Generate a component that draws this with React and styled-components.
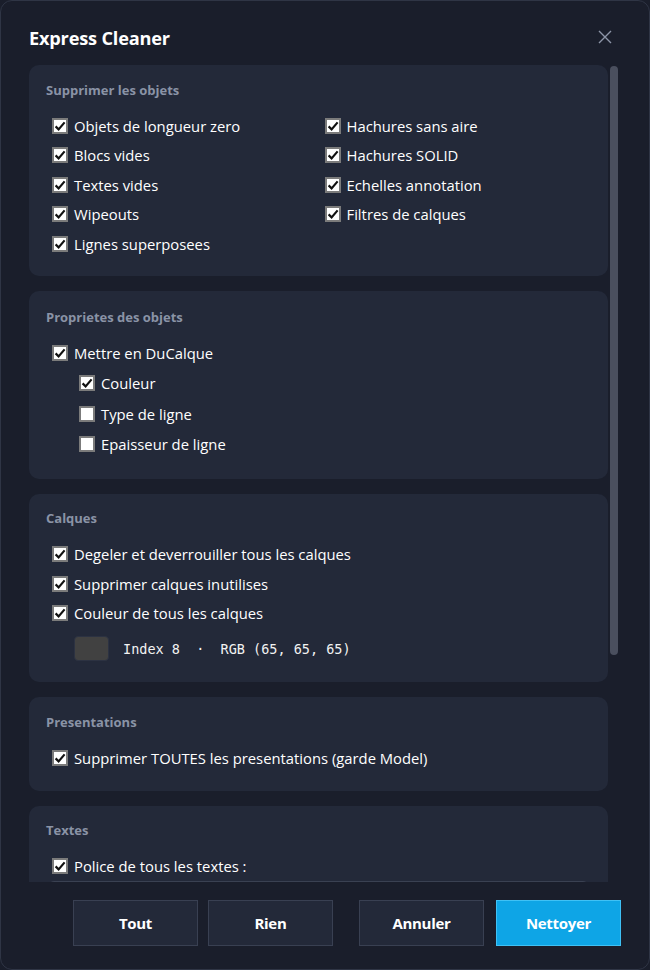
import styled, { createGlobalStyle } from "styled-components";

const GlobalStyle = createGlobalStyle`
  html, body {
    margin: 0;
    padding: 0;
    background: #1a1e2b;
  }
  body {
    font-family: "Open Sans", "Noto Sans", sans-serif;
    color: #ffffff;
  }
`;

const supprimer = [
    ["Objets de longueur zero", "Hachures sans aire"],
    ["Blocs vides", "Hachures SOLID"],
    ["Textes vides", "Echelles annotation"],
    ["Wipeouts", "Filtres de calques"],
    ["Lignes superposees", null],
];

const CheckBox = function ({checked}) {
    return (
        <Box>
            {checked && (
                <svg width="12" height="12" viewBox="0 0 12 12">
                    <path d="M1.6 6.4 L4.6 9.4 L10.6 2.4" fill="none" stroke="#111" strokeWidth="2.2" />
                </svg>
            )}
        </Box>
    );
}

const Option = function ({label, checked = true, indent}) {
    return (
        <Row indent={indent}>
            <CheckBox checked={checked} />
            <span>{label}</span>
        </Row>
    );
}

export default function App() {
    return (
        <>
            <GlobalStyle />
            <Dialog>
                <Header>
                    <Title>Express Cleaner</Title>
                    <Close>
                        <svg width="14" height="14" viewBox="0 0 14 14">
                            <path d="M1 1 L13 13 M13 1 L1 13" stroke="#8d95a8" strokeWidth="1.4" />
                        </svg>
                    </Close>
                </Header>

                <Body>
                    <Content>
                        <Section>
                            <SectionTitle>Supprimer les objets</SectionTitle>
                            <Grid>
                                {supprimer.flat().map((label, i) =>
                                    label ? <Option key={i} label={label} /> : <div key={i} />
                                )}
                            </Grid>
                        </Section>

                        <Section top="17.5px" bottom="19px">
                            <SectionTitle>Proprietes des objets</SectionTitle>
                            <Option label="Mettre en DuCalque" />
                            <Option label="Couleur" indent />
                            <Option label="Type de ligne" checked={false} indent />
                            <Option label="Epaisseur de ligne" checked={false} indent />
                        </Section>

                        <Section bottom="18px">
                            <SectionTitle>Calques</SectionTitle>
                            <Option label="Degeler et deverrouiller tous les calques" />
                            <Option label="Supprimer calques inutilises" />
                            <Option label="Couleur de tous les calques" />
                            <ColorRow>
                                <Swatch color="#414141" />
                                <Mono>{"Index 8  ·  RGB (65, 65, 65)"}</Mono>
                            </ColorRow>
                        </Section>

                        <Section bottom="18.5px">
                            <SectionTitle>Presentations</SectionTitle>
                            <Option label="Supprimer TOUTES les presentations (garde Model)" />
                        </Section>

                        <Section top="14.5px">
                            <SectionTitle>Textes</SectionTitle>
                            <Option label="Police de tous les textes :" />
                            <Field />
                        </Section>
                    </Content>
                    <Track>
                        <Thumb />
                    </Track>
                </Body>

                <Footer>
                    <Group>
                        <Button>Tout</Button>
                        <Button>Rien</Button>
                    </Group>
                    <Group>
                        <Button>Annuler</Button>
                        <Button primary>Nettoyer</Button>
                    </Group>
                </Footer>
            </Dialog>
        </>
    );
}

// Design
const Dialog = styled.div`
  box-sizing: border-box;
  width: 650px;
  height: 970px;
  border: 1px solid #2f3545;
  border-radius: 12px;
  background: #1a1e2b;
  display: flex;
  flex-direction: column;
  overflow: hidden;
`;

const Header = styled.div`
  box-sizing: border-box;
  display: flex;
  align-items: center;
  justify-content: space-between;
  height: 64px;
  padding: 10px 34px 0 28px;
  flex-shrink: 0;
`;

const Title = styled.h1`
  margin: 0;
  font-size: 18.2px;
  font-weight: 700;
  color: #ffffff;
  letter-spacing: -0.2px;
`;

const Close = styled.div`
  display: flex;
  align-items: center;
  justify-content: center;
  width: 20px;
  height: 20px;
  margin-top: -2px;
`;

const Body = styled.div`
  flex: 1;
  min-height: 0;
  display: flex;
  gap: 2px;
  padding: 0 31px 0 28px;
`;

const Content = styled.div`
  width: 580px;
  overflow: hidden;
  display: flex;
  flex-direction: column;
  gap: 15px;
`;

const Track = styled.div`
  width: 8px;
  padding-top: 1px;
`;

const Thumb = styled.div`
  height: 589px;
  border-radius: 4px;
  background: #4a4f5e;
`;

const Section = styled.div`
  flex-shrink: 0;
  background: #232939;
  border-radius: 10px;
  padding: ${props => props.top || "15.5px"} 17px ${props => props.bottom || "17px"};
`;

const SectionTitle = styled.div`
  font-size: 13px;
  font-weight: 700;
  line-height: 18px;
  color: #8a93a6;
  margin-bottom: 12.5px;
`;

const Grid = styled.div`
  display: grid;
  grid-template-columns: 1fr 1fr;
`;

const Row = styled.label`
  display: flex;
  align-items: center;
  height: ${props => props.indent ? "30.5px" : "29.5px"};
  padding-left: ${props => props.indent ? "33px" : "6px"};
  font-size: 14.8px;
  color: #ffffff;
`;

const Box = styled.span`
  box-sizing: border-box;
  width: 16px;
  height: 16px;
  margin-right: 6px;
  background: #ffffff;
  border: 2px solid #7b7b7b;
  display: flex;
  align-items: center;
  justify-content: center;
  flex-shrink: 0;
`;

const ColorRow = styled.div`
  display: flex;
  align-items: center;
  gap: 14px;
  padding: 8px 0 3px 28px;
`;

const Swatch = styled.div`
  width: 33px;
  height: 23px;
  border-radius: 4px;
  border: 1px solid #2c3242;
  background: ${props => props.color};
`;

const Mono = styled.span`
  font-family: "DejaVu Sans Mono", "Liberation Mono", monospace;
  font-size: 13.5px;
  white-space: pre;
  color: #f2f2f2;
`;

const Field = styled.div`
  box-sizing: border-box;
  height: 34px;
  margin: 0 2px 8px 2px;
  border: 1px solid #3a4152;
  border-radius: 6px;
  background: #1e2331;
`;

const Footer = styled.div`
  flex-shrink: 0;
  display: flex;
  justify-content: flex-end;
  gap: 26px;
  padding: 18px 28px 23px;
`;

const Group = styled.div`
  display: flex;
  gap: 10px;

  &:last-child {
    gap: 12px;
  }
`;

const Button = styled.button`
  width: 125px;
  height: 46px;
  border: 1px solid ${props => props.primary ? "#3fc1f5" : "#394052"};
  background: ${props => props.primary ? "#0ea5e6" : "#232939"};
  color: #ffffff;
  font-family: "Open Sans", "Noto Sans", sans-serif;
  font-size: 15px;
  font-weight: 700;
  letter-spacing: -0.3px;
  cursor: pointer;
`;
